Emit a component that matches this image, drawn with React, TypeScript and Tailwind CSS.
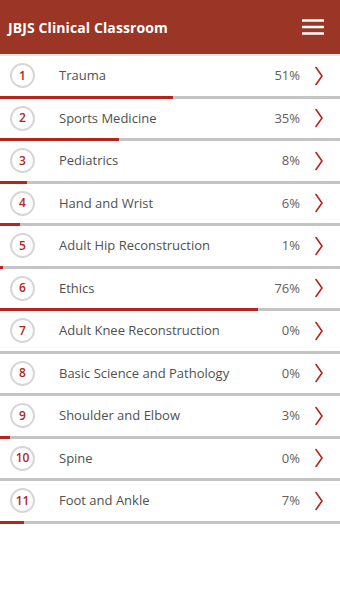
const topics = [
  { name: "Trauma", pct: 51 },
  { name: "Sports Medicine", pct: 35 },
  { name: "Pediatrics", pct: 8 },
  { name: "Hand and Wrist", pct: 6 },
  { name: "Adult Hip Reconstruction", pct: 1 },
  { name: "Ethics", pct: 76 },
  { name: "Adult Knee Reconstruction", pct: 0 },
  { name: "Basic Science and Pathology", pct: 0 },
  { name: "Shoulder and Elbow", pct: 3 },
  { name: "Spine", pct: 0 },
  { name: "Foot and Ankle", pct: 7 },
];

const Chevron = () => (
  <svg width="10" height="20" viewBox="0 0 10 20" fill="none">
    <path d="M2 1.5 L8 10 L2 18.5" stroke="#b3261e" strokeWidth="1.6" strokeLinecap="round" strokeLinejoin="round" />
  </svg>
);

const Hamburger = () => (
  <svg width="22" height="18" viewBox="0 0 22 18" fill="none">
    <path d="M1 2.5 H21 M1 9 H21 M1 15.5 H21" stroke="white" strokeWidth="2.6" strokeLinecap="round" />
  </svg>
);

const TopicRow = ({ index, name, pct }: { index: number; name: string; pct: number }) => {
  return (
    <div>
      <div className="h-[39.5px] flex items-center pl-[10px] pr-[16px]">
        <div className="h-[25px] w-[25px] rounded-full border-2 border-[#d6d6d6] flex items-center justify-center text-[12px] font-semibold text-[#b3261e]">
          {index}
        </div>
        <span className="ml-[24px] flex-1 text-[13px] text-[#505050]">{name}</span>
        <span className="text-[13px] text-[#606060] mr-[14px]">{pct}%</span>
        <Chevron />
      </div>
      <div className="h-[3px] bg-[#c4c4c4] flex">
        <div className="h-full bg-[#b3261e]" style={{ width: `${pct}%` }} />
      </div>
    </div>
  );
};

export default function App() {
  return (
    <div className="w-[340px] h-[606px] bg-white" style={{ fontFamily: '"Open Sans", sans-serif' }}>
      <div className="h-[54px] bg-[#9b3525] flex items-center justify-between pl-[8px] pr-[16px]">
        <span className="text-white font-bold text-[14px] tracking-[0.1px]">JBJS Clinical Classroom</span>
        <Hamburger />
      </div>
      <div className="h-[2px] bg-[#e4e4e4]" />
      {topics.map((t, i) => (
        <TopicRow key={t.name} index={i + 1} name={t.name} pct={t.pct} />
      ))}
    </div>
  );
}
